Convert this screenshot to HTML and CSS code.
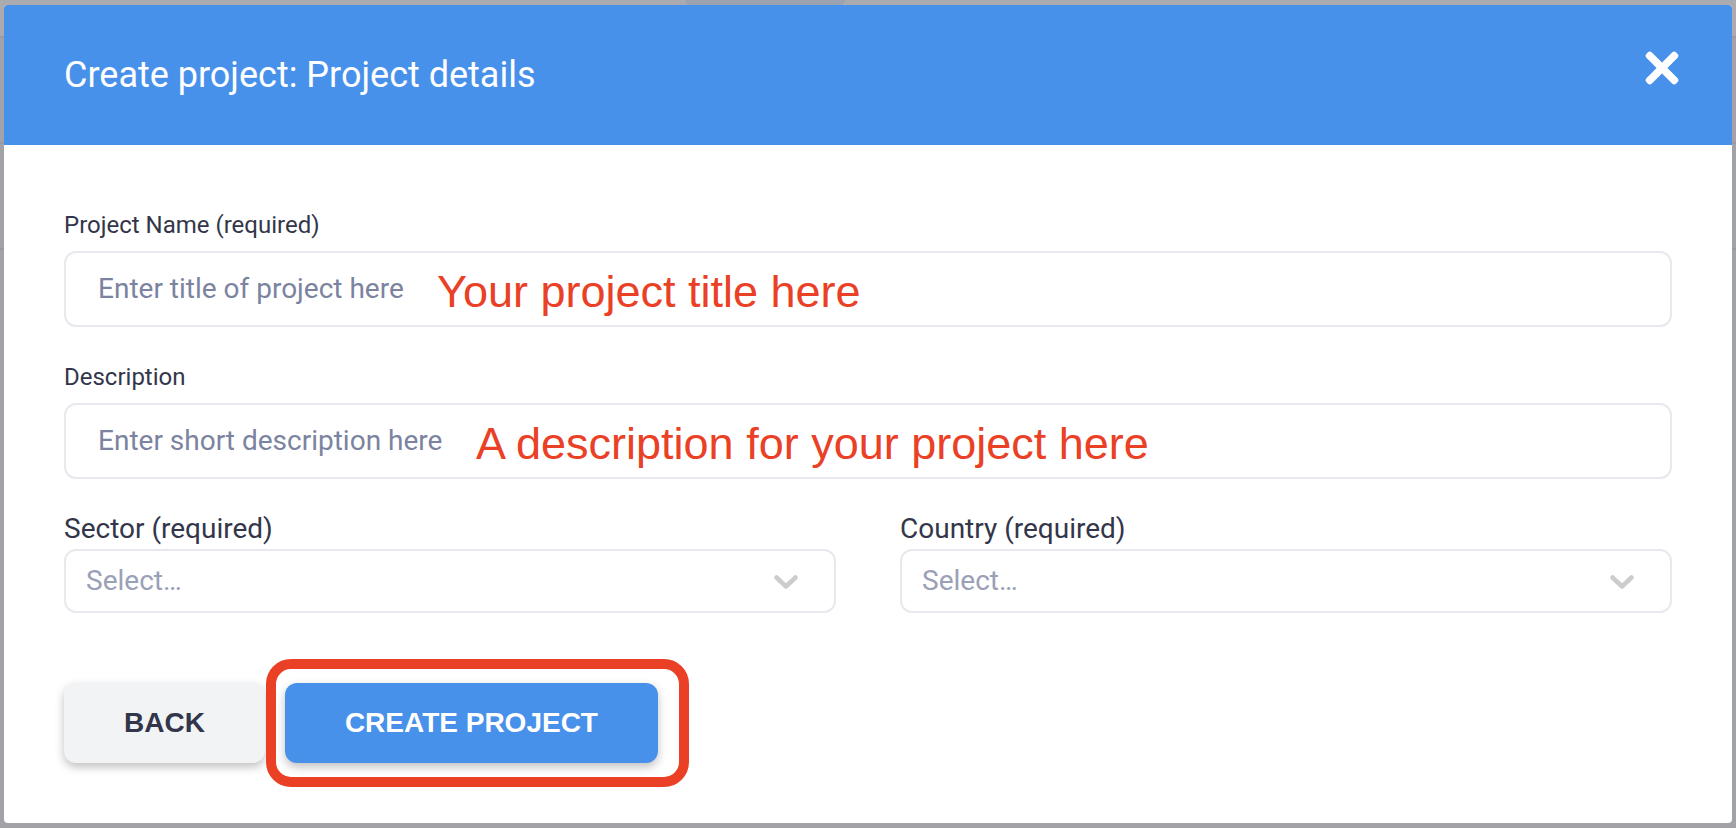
FILE: index.html
```html
<!DOCTYPE html>
<html lang="en">
<head>
<meta charset="utf-8">
<meta name="viewport" content="width=device-width, initial-scale=1">
<title>Create project: Project details</title>
<link rel="stylesheet" href="styles.css">
</head>
<body>
<div class="backdrop" aria-hidden="true">
  <div class="backdrop-bar"><span class="backdrop-tab"></span></div>
  <div class="backdrop-row"></div>
  <div class="backdrop-row"></div>
</div>
<main class="modal" role="dialog" aria-labelledby="modal-title">
  <header class="modal-header">
    <h1 class="modal-title" id="modal-title">Create project: Project details</h1>
    <button class="close" type="button" aria-label="Close">
      <svg viewBox="0 0 34 34" aria-hidden="true">
        <g transform="rotate(45 17 17)" fill="currentColor">
          <rect x="-4" y="13.250" width="42" height="7.500" rx="3"/>
          <rect x="13.250" y="-4" width="7.500" height="42" rx="3"/>
        </g>
      </svg>
    </button>
  </header>
  <form class="modal-body">
    <div class="field">
      <label class="label" for="name">Project Name (required)</label>
      <div class="control">
        <input class="input" id="name" type="text" placeholder="Enter title of project here">
        <span class="note note-name">Your project title here</span>
      </div>
    </div>
    <div class="field">
      <label class="label" for="description">Description</label>
      <div class="control">
        <input class="input" id="description" type="text" placeholder="Enter short description here">
        <span class="note note-description">A description for your project here</span>
      </div>
    </div>
    <div class="columns">
      <div class="select-field">
        <label class="select-label" for="sector">Sector (required)</label>
        <div class="control">
          <select class="select" id="sector"><option>Select…</option></select>
          <svg class="chevron" viewBox="0 0 24 14" aria-hidden="true"><path d="M2.500 2.500L12 11.500L21.500 2.500"/></svg>
        </div>
      </div>
      <div class="select-field">
        <label class="select-label" for="country">Country (required)</label>
        <div class="control">
          <select class="select" id="country"><option>Select…</option></select>
          <svg class="chevron" viewBox="0 0 24 14" aria-hidden="true"><path d="M2.500 2.500L12 11.500L21.500 2.500"/></svg>
        </div>
      </div>
    </div>
    <div class="actions">
      <button class="button" type="button">BACK</button>
      <div class="highlighted">
        <button class="button button-primary" type="submit">CREATE PROJECT</button>
        <span class="highlight"></span>
      </div>
    </div>
  </form>
</main>
</body>
</html>
```
FILE: styles.css
```css
* {
  box-sizing: border-box;
}

body {
  margin: 0;
  padding: 5px 4px;
  min-height: 100vh;
  position: relative;
  background: #a2a2a9;
  color: #33364a;
  font-family: Roboto, "Liberation Sans", sans-serif;
}

/* Dimmed page behind the dialog */
.backdrop {
  position: absolute;
  inset: 0;
  overflow: hidden;
}

.backdrop-bar {
  height: 38px;
  background: #ababaf;
  border-bottom: 2px solid #9a9aa0;
}

.backdrop-tab {
  display: block;
  width: 160px;
  height: 6px;
  margin-left: 685px;
  border-radius: 0 0 8px 8px;
  background: #9ba3b0;
}

.backdrop-row {
  height: 106px;
  border-bottom: 2px solid #9a9aa0;
}

.modal {
  position: relative;
  overflow: hidden;
  border-radius: 4px;
  background: #fff;
}

.modal-header {
  display: flex;
  justify-content: space-between;
  align-items: flex-start;
  padding: 46px 53px 46px 60px;
  background: #4891eb;
  color: #fff;
}

.modal-title {
  margin: 0;
  font-size: 36px;
  line-height: 48px;
  font-weight: 400;
}

.close {
  width: 34px;
  height: 34px;
  padding: 0;
  border: 0;
  background: none;
  color: inherit;
}

.close svg {
  display: block;
}

.modal-body {
  padding: 64px 60px 60px;
}

.field {
  margin-bottom: 34px;
}

.label,
.select-label {
  display: block;
  line-height: 32px;
}

.label {
  margin-bottom: 10px;
  font-size: 24px;
}

.select-label {
  margin-bottom: 4px;
  font-size: 28px;
}

.control {
  position: relative;
}

.input,
.select {
  display: block;
  width: 100%;
  border: 2px solid #e8e8ee;
  border-radius: 12px;
  background: #fff;
  font: 28px Roboto, "Liberation Sans", sans-serif;
}

.input {
  height: 76px;
  padding: 0 32px 2px;
  color: #33364a;
}

.input::placeholder {
  color: #7b83a0;
  opacity: 1;
}

.select {
  height: 64px;
  padding: 0 60px 2px 20px;
  appearance: none;
  color: #9aa0b6;
}

.chevron {
  position: absolute;
  top: 26px;
  right: 38px;
  width: 24px;
  height: 14px;
  fill: none;
  stroke: #ccc;
  stroke-width: 4.5;
  stroke-linecap: round;
  stroke-linejoin: round;
  pointer-events: none;
}

.note {
  position: absolute;
  top: 15px;
  color: #ea4025;
  font-family: "Liberation Sans", sans-serif;
  font-size: 45px;
  line-height: 52px;
  white-space: nowrap;
  pointer-events: none;
}

.note-name {
  left: 373px;
}

.note-description {
  left: 412px;
}

.columns {
  display: grid;
  grid-template-columns: 1fr 1fr;
  gap: 64px;
}

.actions {
  display: flex;
  gap: 20px;
  margin-top: 70px;
}

.button {
  display: block;
  height: 80px;
  padding: 0 60px;
  border: 0;
  border-radius: 12px;
  background: #f2f3f5;
  box-shadow: 0 4px 10px rgba(0, 0, 0, 0.25);
  color: #33364a;
  font: bold 28px "Liberation Sans", sans-serif;
}

.button-primary {
  background: #4891eb;
  color: #fff;
}

.highlighted {
  position: relative;
}

.highlight {
  position: absolute;
  inset: -24px -31px -24px -19px;
  border: 10px solid #ea4025;
  border-radius: 25px;
  pointer-events: none;
}
```
